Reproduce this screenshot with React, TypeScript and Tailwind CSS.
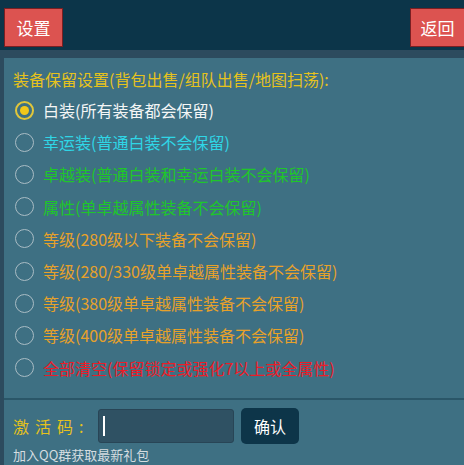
import { useState } from "react";

const font = { fontFamily: '"Noto Sans CJK SC", "Noto Sans", sans-serif' };

const options = [
  { text: "白装(所有装备都会保留)", color: "text-[#f4f6f6]" },
  { text: "幸运装(普通白装不会保留)", color: "text-[#2fd6e6]" },
  { text: "卓越装(普通白装和幸运白装不会保留)", color: "text-[#1fc62a]" },
  { text: "属性(单卓越属性装备不会保留)", color: "text-[#1fc62a]" },
  { text: "等级(280级以下装备不会保留)", color: "text-[#e7a12a]" },
  { text: "等级(280/330级单卓越属性装备不会保留)", color: "text-[#e7a12a]" },
  { text: "等级(380级单卓越属性装备不会保留)", color: "text-[#e7a12a]" },
  { text: "等级(400级单卓越属性装备不会保留)", color: "text-[#e7a12a]" },
  { text: "全部清空(保留锁定或强化7以上或全属性)", color: "text-[#ec1c28]" },
];

export default function App() {
  const [selected, setSelected] = useState(0);

  return (
    <div className="w-[464px] h-[465px] overflow-hidden bg-[#2c4b5e] flex flex-col" style={font}>
      {/* 顶部栏 */}
      <div className="h-[53px] bg-[#0c3549] flex items-start justify-between pl-1 pt-2">
        <button className="w-[59px] h-[39px] bg-[#dc5350] border border-[#7a1f22] text-white text-[17px]">
          设置
        </button>
        <button className="w-[54px] h-[39px] bg-[#dc5350] border border-[#7a1f22] border-r-0 text-white text-[17px]">
          返回
        </button>
      </div>

      <div className="flex-1 ml-1 mt-2 bg-[#3e7083] flex flex-col">
        {/* 选项列表 */}
        <div className="h-[340px] pl-[9px] pt-[9px]">
          <div className="text-[#e6c21c] text-[16px] leading-6">
            装备保留设置(背包出售/组队出售/地图扫荡):
          </div>
          <div className="flex flex-col mt-[3px]">
            {options.map((option, index) => (
              <div
                key={index}
                onClick={() => setSelected(index)}
                className="h-[32.2px] flex items-center gap-[9px] pl-[2px] cursor-pointer"
              >
                {selected === index ? (
                  <span className="w-[19px] h-[19px] rounded-full border-2 border-[#e0c63a] flex items-center justify-center">
                    <span className="w-[9px] h-[9px] rounded-full bg-[#f2c81a]" />
                  </span>
                ) : (
                  <span className="w-[19px] h-[19px] rounded-full border border-[#a9bcc4]" />
                )}
                <span className={`${option.color} text-[16px]`}>{option.text}</span>
              </div>
            ))}
          </div>
        </div>

        <div className="h-[2px] bg-[#2a5668]" />

        {/* 激活码 */}
        <div className="flex items-center pl-[9px] pt-2">
          <span className="text-[#e6c21c] text-[16px] tracking-[6px] w-[85px]">激活码:</span>
          <div className="w-[136px] h-[34px] bg-[#2f5163] border border-[#284556] rounded-[3px] flex items-center pl-[4px]">
            <span className="w-[2px] h-[20px] bg-white" />
          </div>
          <button className="ml-[7px] w-[58px] h-[36px] bg-[#0d3549] rounded-[5px] text-white text-[16px]">
            确认
          </button>
        </div>
        <div className="pl-[9px] text-[#d5dde0] text-[13px] leading-5 mt-[1px]">加入QQ群获取最新礼包</div>
      </div>
    </div>
  );
}
